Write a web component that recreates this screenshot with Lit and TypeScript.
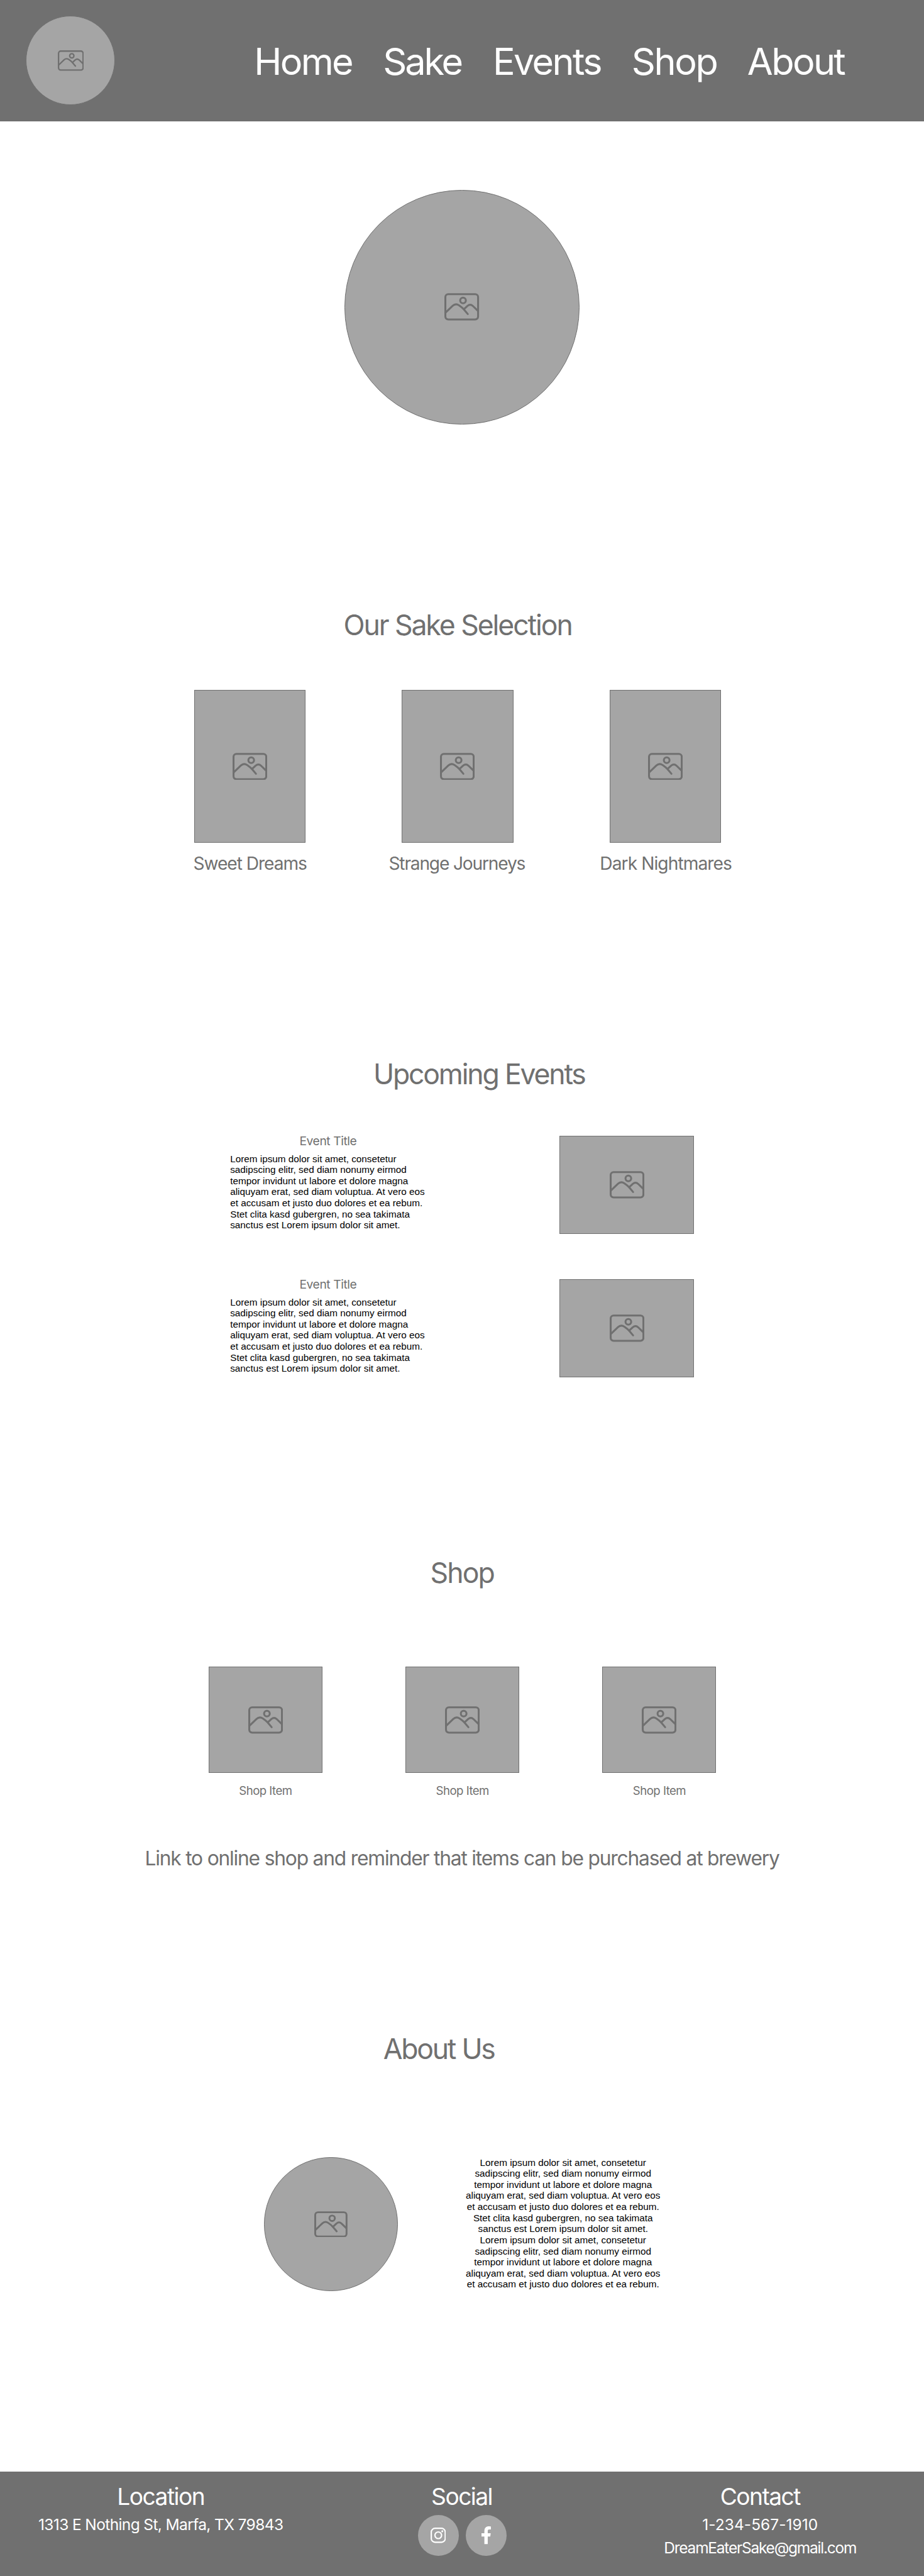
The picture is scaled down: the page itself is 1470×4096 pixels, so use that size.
import { LitElement, html, svg, unsafeCSS } from "lit";
import { customElement, property } from "lit/decorators.js";
import { classMap } from "lit/directives/class-map.js";

// Lengths written as "12u" are design units; 1920 of them span the 1470px page.
const UNIT = 1470 / 1920;
const sheet = (source: string) =>
  unsafeCSS(source.replace(/(-?\d*\.?\d+)u\b/g, (_m, n) => `${(Number(n) * UNIT).toFixed(3)}px`));

const LOREM = [
  "Lorem ipsum dolor sit amet, consetetur",
  "sadipscing elitr, sed diam nonumy eirmod",
  "tempor invidunt ut labore et dolore magna",
  "aliquyam erat, sed diam voluptua. At vero eos",
  "et accusam et justo duo dolores et ea rebum.",
  "Stet clita kasd gubergren, no sea takimata",
  "sanctus est Lorem ipsum dolor sit amet.",
];

@customElement("image-placeholder")
export class ImagePlaceholder extends LitElement {
  @property({ type: Boolean }) round = false;

  static styles = sheet(`
    :host { display: block; }
    .frame {
      box-sizing: border-box;
      width: 100%;
      height: 100%;
      display: flex;
      align-items: center;
      justify-content: center;
      background: #a5a5a5;
      border: 1px solid #707070;
    }
    .round { border-radius: 50%; }
    .icon {
      display: block;
      width: var(--icon-width, 72u);
      height: auto;
      fill: none;
      stroke: #707070;
      stroke-width: 4;
      stroke-linecap: round;
      stroke-linejoin: round;
    }
  `);

  render() {
    return html`<div class=${classMap({ frame: true, round: this.round })}>
      <svg class="icon" viewBox="0 0 72 57">
        ${svg`
          <rect x="2" y="2.2" width="68" height="52.6" rx="6"></rect>
          <circle cx="38.7" cy="15.3" r="5.9"></circle>
          <path d="M3 40L17.3 26.4Q23.3 20.8 30.3 25.4Q36.5 29.5 40.5 34L48.6 43.6"></path>
          <path d="M40.6 33.6L48 26.7Q53.7 21.8 59.2 26.8L69 36.3"></path>
        `}
      </svg>
    </div>`;
  }
}

@customElement("app-root")
export class AppRoot extends LitElement {
  static styles = sheet(`
    :host {
      display: block;
      width: 1920u;
      overflow: hidden;
      background: #fff;
      color: #707070;
      font-family: Inter, "Liberation Sans", sans-serif;
      line-height: 1.2;
      white-space: nowrap;
    }
    h1, h2, h3, p, ul { margin: 0; padding: 0; font-weight: 400; }

    .header {
      display: flex;
      align-items: center;
      box-sizing: border-box;
      height: 252u;
      padding-left: 54u;
      background: #707070;
    }
    .logo { width: 185.5u; height: 185.5u; --icon-width: 54u; }
    .nav {
      display: grid;
      grid-template-columns: 268u 228u 288.5u 240.4u auto;
      margin-left: 288.4u;
      padding-top: 3.6u;
      font-size: 77.6u;
      letter-spacing: -0.0445em;
      color: #fff;
    }
    .nav-sake { letter-spacing: -0.0537em; }
    .nav-shop { letter-spacing: -0.0396em; }

    .hero { width: 487.5u; height: 487.5u; margin: 142u 0 0 716.2u; }

    .heading { font-size: 58.2u; height: 69.8u; }
    .heading-sake { margin: 382.2u 0 99.5u 713.7u; letter-spacing: -0.0462em; }
    .heading-events { margin: 380.4u 0 92.1u 775.8u; letter-spacing: -0.049em; }
    .heading-shop { margin: 372.4u 0 158.6u 894u; letter-spacing: -0.0422em; }
    .heading-about { margin: 337.1u 0 188.3u 796.3u; letter-spacing: -0.0501em; }

    .sakes { display: flex; gap: 200.5u; padding-left: 403u; }
    .sake { width: 231.5u; }
    .sake-image { height: 317u; }
    .sake-name { margin-top: 22.5u; height: 44.2u; font-size: 36.8u; }
    .sweet { margin-left: -1.5u; letter-spacing: -0.037em; }
    .strange { margin-left: -27.2u; letter-spacing: -0.042em; }
    .dark { margin-left: -20.6u; letter-spacing: -0.0328em; }

    .events { display: flex; flex-direction: column; gap: 93.8u; padding-left: 478.3u; }
    .event { display: flex; height: 204u; }
    .event-text { width: 684u; margin-top: -4u; }
    .event-title {
      height: 30.2u;
      padding-left: 144u;
      font-size: 25.2u;
      letter-spacing: -0.0227em;
    }
    .event-image { width: 280u; height: 204u; }
    .copy {
      font-family: "Liberation Sans", Arial, sans-serif;
      font-size: 20u;
      line-height: 23u;
      color: #000;
    }
    .event-copy { margin-top: 9.9u; }

    .items { display: flex; gap: 172.2u; padding-left: 433u; }
    .item { width: 237u; }
    .item-image { height: 221u; }
    .item-name {
      margin-top: 21.8u;
      height: 29.2u;
      padding-left: 63.7u;
      font-size: 24.3u;
      letter-spacing: -0.0279em;
    }
    .shop-link {
      margin: 101.2u 0 0 301u;
      height: 49.8u;
      font-size: 41.5u;
      letter-spacing: -0.0379em;
    }

    .about { display: flex; gap: 138u; height: 279u; padding-left: 548u; }
    .about-image { width: 279u; height: 279u; --icon-width: 69u; }
    .about-copy { width: 410u; text-align: center; }

    .footer {
      display: grid;
      grid-template-columns: 668u 583u 657u;
      box-sizing: border-box;
      height: 218u;
      margin-top: 375u;
      padding-top: 22.5u;
      background: #707070;
      color: #fff;
    }
    .column { display: flex; flex-direction: column; align-items: center; }
    .column-title { height: 58.2u; font-size: 48.5u; letter-spacing: -0.041em; }
    .line { height: 38.4u; margin-top: 9.9u; font-size: 32u; }
    .address { letter-spacing: -0.0254em; }
    .phone { letter-spacing: 0.0014em; }
    .email { letter-spacing: -0.0505em; }
    .socials { display: flex; gap: 15u; margin-top: 8.8u; padding-left: 2u; }
    .social {
      display: flex;
      align-items: center;
      justify-content: center;
      width: 85u;
      height: 85u;
      border-radius: 50%;
      background: #a5a5a5;
    }
    .instagram { width: 32u; height: 32u; fill: none; stroke: #fff; stroke-width: 2.8; }
    .instagram-dot { fill: #fff; stroke: none; }
    .facebook { width: 19.7u; height: 37u; fill: #fff; }
  `);

  private sakes = [
    { name: "Sweet Dreams", key: "sweet" },
    { name: "Strange Journeys", key: "strange" },
    { name: "Dark Nightmares", key: "dark" },
  ];

  private lines(rows: string[]) {
    return rows.map((row) => html`<div>${row}</div>`);
  }

  render() {
    return html`
      <header class="header">
        <image-placeholder class="logo" round></image-placeholder>
        <nav class="nav">
          <span>Home</span>
          <span class="nav-sake">Sake</span>
          <span>Events</span>
          <span class="nav-shop">Shop</span>
          <span>About</span>
        </nav>
      </header>

      <image-placeholder class="hero" round></image-placeholder>

      <h2 class="heading heading-sake">Our Sake Selection</h2>
      <div class="sakes">
        ${this.sakes.map(
          (sake) => html`<div class="sake">
            <image-placeholder class="sake-image"></image-placeholder>
            <p class="sake-name ${sake.key}">${sake.name}</p>
          </div>`,
        )}
      </div>

      <h2 class="heading heading-events">Upcoming Events</h2>
      <div class="events">
        ${[0, 1].map(
          () => html`<div class="event">
            <div class="event-text">
              <h3 class="event-title">Event Title</h3>
              <div class="copy event-copy">${this.lines(LOREM)}</div>
            </div>
            <image-placeholder class="event-image"></image-placeholder>
          </div>`,
        )}
      </div>

      <h2 class="heading heading-shop">Shop</h2>
      <div class="items">
        ${[0, 1, 2].map(
          () => html`<div class="item">
            <image-placeholder class="item-image"></image-placeholder>
            <p class="item-name">Shop Item</p>
          </div>`,
        )}
      </div>
      <p class="shop-link">Link to online shop and reminder that items can be purchased at brewery</p>

      <h2 class="heading heading-about">About Us</h2>
      <div class="about">
        <image-placeholder class="about-image" round></image-placeholder>
        <div class="copy about-copy">${this.lines([...LOREM, ...LOREM.slice(0, 5)])}</div>
      </div>

      <footer class="footer">
        <div class="column">
          <h3 class="column-title">Location</h3>
          <p class="line address">1313 E Nothing St, Marfa, TX 79843</p>
        </div>
        <div class="column">
          <h3 class="column-title">Social</h3>
          <div class="socials">
            <span class="social">
              <svg class="instagram" viewBox="0 0 32 32">
                <rect x="1.5" y="1.5" width="29" height="29" rx="7.8"></rect>
                <circle cx="16" cy="16" r="6.9"></circle>
                <circle class="instagram-dot" cx="24.4" cy="7.7" r="2"></circle>
              </svg>
            </span>
            <span class="social">
              <svg class="facebook" viewBox="0 0 19.7 37">
                <path d="M6 37V21.3H0V14.3H6V10C6 3.5 9.5 0 15.5 0C17.5 0 19.6 .4 19.6 .4V6.6H16.2C13.5 6.6 13 8.2 13 10V14.3H19.2L18.2 21.3H13V37Z"></path>
              </svg>
            </span>
          </div>
        </div>
        <div class="column">
          <h3 class="column-title">Contact</h3>
          <p class="line phone">1-234-567-1910</p>
          <p class="line email">DreamEaterSake@gmail.com</p>
        </div>
      </footer>
    `;
  }
}
